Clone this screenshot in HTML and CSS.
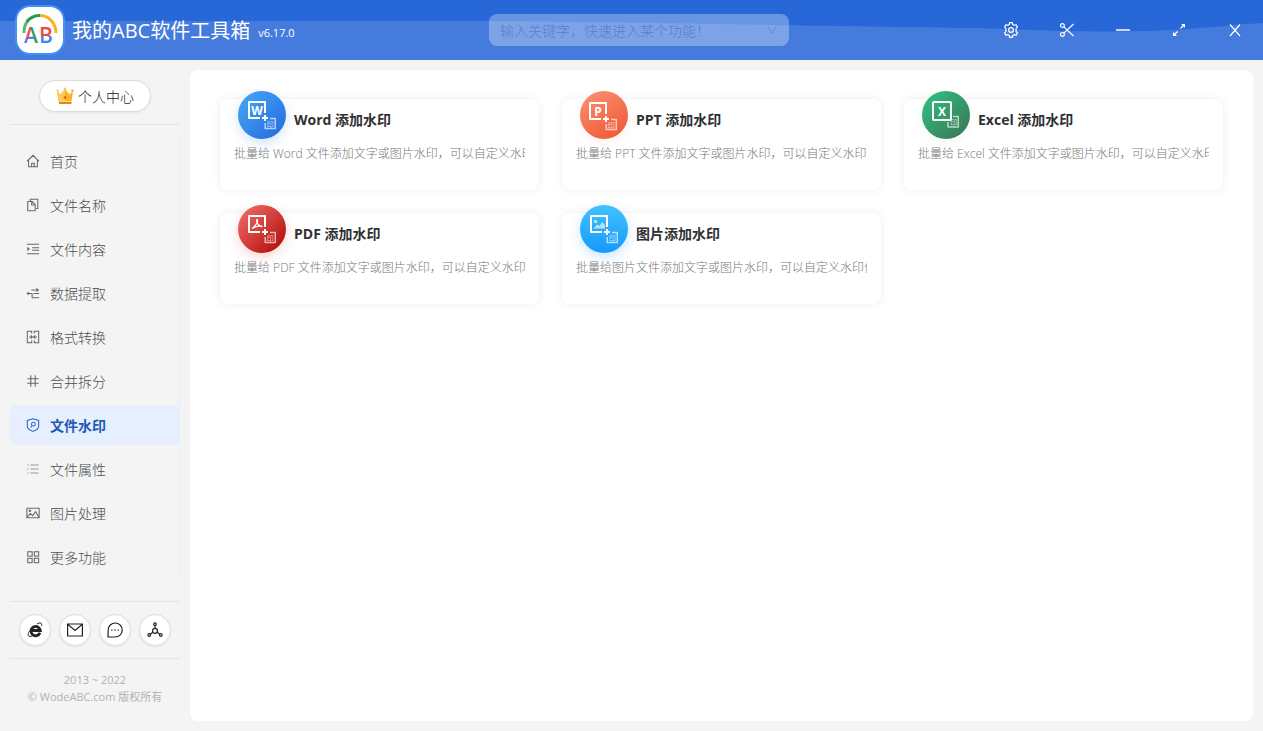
FILE: index.html
```html
<!DOCTYPE html>
<html lang="zh-CN">
<head>
<meta charset="utf-8">
<title>我的ABC软件工具箱</title>
<link rel="stylesheet" href="styles.css">
</head>
<body>
<div class="app">
  <header class="topbar">
    <svg class="wave" viewBox="0 0 1263 60" preserveAspectRatio="none" aria-hidden="true">
      <path d="M0 21H470C650 22 800 26 980 28C1050 31 1100 32 1150 31C1200 29 1230 25 1263 23V60H0Z" fill="#457bdd"/>
    </svg>
    <div class="brand">
      <svg class="logo" viewBox="0 0 50 50" aria-hidden="true">
        <defs>
          <linearGradient id="la" x1="0" x2="1" y1="1" y2=".8"><stop offset=".25" stop-color="#4285f4"/><stop offset=".3" stop-color="#e94b45"/><stop offset=".58" stop-color="#e94b45"/><stop offset=".62" stop-color="#2f9e4f"/></linearGradient>
          <linearGradient id="lb" x1="0" x2="0" y1="0" y2="1"><stop offset=".54" stop-color="#e94b45"/><stop offset=".58" stop-color="#4285f4"/></linearGradient>
        </defs>
        <rect x="1" y="1" width="48" height="48" rx="14" fill="#fff" stroke="#3f93f8" stroke-width="2"/>
        <g fill="none" stroke-width="3">
          <path d="M9 28A16.500 18 0 0 1 13 15.500" stroke="#5bb974"/>
          <path d="M12 16.500A16.500 18 0 0 1 25.500 10.500" stroke="#1f9d4c"/>
          <path d="M25.500 10.500A16 18 0 0 1 41 28" stroke="#f9b218"/>
        </g>
        <text x="9" y="38" class="logo-letter" fill="url(#la)">A</text>
        <path d="M13 33h7" stroke="#4285f4" stroke-width="2"/>
        <text x="24" y="38" class="logo-letter" fill="url(#lb)">B</text>
      </svg>
      <h1 class="brand-name">我的ABC软件工具箱</h1>
      <span class="version">v6.17.0</span>
    </div>
    <label class="search">
      <input class="search-input" type="text" aria-label="搜索功能" placeholder="输入关键字，快速进入某个功能！">
      <svg class="chevron" viewBox="0 0 12 12" aria-hidden="true"><path d="M2 3l4 6 4-6"/></svg>
    </label>
    <div class="controls">
      <button class="control" type="button" aria-label="设置">
        <svg viewBox="0 0 16 16"><path d="M6.300 2.500L6.700 .7h2.600l.4 1.800 1.600.9 1.800-.6 1.300 2.300-1.300 1.300v3.200l1.300 1.300-1.300 2.300-1.800-.6-1.600.9-.4 1.800H6.700l-.4-1.800-1.600-.9-1.800.6-1.300-2.300 1.300-1.300V6.400L1.600 5.100l1.300-2.300 1.800.6z"/><circle cx="8" cy="8" r="2.400"/></svg>
      </button>
      <button class="control" type="button" aria-label="截图">
        <svg viewBox="0 0 16 16"><circle cx="3.400" cy="3.600" r="1.900"/><circle cx="3.400" cy="12.400" r="1.900"/><path d="M4.900 4.900L14.500 14M4.900 11.100L14.500 2"/></svg>
      </button>
      <button class="control" type="button" aria-label="最小化">
        <svg viewBox="0 0 16 16"><path d="M1 8h14" class="minimize"/></svg>
      </button>
      <button class="control" type="button" aria-label="最大化">
        <svg viewBox="0 0 16 16"><path d="M9.500 6.500L13 3M6.500 9.500L3 13"/><path d="M10 2h4v4zM2 10v4h4z" class="solid"/></svg>
      </button>
      <button class="control" type="button" aria-label="关闭">
        <svg viewBox="0 0 16 16"><path d="M3 2.500l10 11.500M13 2.500L3 14"/></svg>
      </button>
    </div>
  </header>

  <div class="body">
    <aside class="sidebar">
      <div class="profile-row">
        <button class="profile" type="button">
          <svg class="crown" viewBox="0 0 18 18" aria-hidden="true">
            <path d="M1 4l3.800 3.500L9 1.500l4.200 6L17 4l-1.500 10.500h-13z" fill="#f9b522"/>
            <path d="M1 4l3.800 3.500L9 1.500v13H2.500z" fill="#fccb5a"/>
            <path d="M3 15h12.500v2H3z" fill="#e0862a"/>
            <circle cx="1.600" cy="3.600" r="1.200" fill="#fdc748"/><circle cx="9" cy="1.800" r="1.300" fill="#fdc748"/><circle cx="16.400" cy="3.600" r="1.200" fill="#fba70b"/>
            <circle cx="9" cy="10.500" r="1.300" fill="#d9532c"/>
          </svg>
          个人中心
        </button>
      </div>
      <nav class="nav">
        <a class="nav-item" href="#"><svg viewBox="0 0 16 16"><path d="M1 8.500L8 1.500l7 7M3 7v7.500h10V7M6.500 14.500v-4h3v4"/></svg>首页</a>
        <a class="nav-item" href="#"><svg viewBox="0 0 16 16"><path d="M5 3.500V1.500h8.500v10.500H11.500M2 4h5l3.500 3.500v7H2zM6.500 4v4h4"/></svg>文件名称</a>
        <a class="nav-item" href="#"><svg viewBox="0 0 16 16"><path d="M1 2.500h14M7 6.500h8M7 9.500h8M1 13.500h14"/><path d="M1.500 5.500v5l3-2.500z" class="solid"/></svg>文件内容</a>
        <a class="nav-item" href="#"><svg viewBox="0 0 16 16"><path d="M1 8.500h6M7 13.500V8.500M6 4.500h7M8.500 8.500h6.500M7 13.500h8"/><path d="M12 2l3 2.500-3 2.500z" class="solid"/><circle cx="2.500" cy="8.500" r="1.500" class="solid"/></svg>数据提取</a>
        <a class="nav-item" href="#"><svg viewBox="0 0 16 16"><path d="M6.500 4V1.500H1.500v13h5V12M9.500 4V1.500h5v13h-5V12M3.500 8h9M5.500 6L7 8 5.500 10M10.500 6L9 8l1.500 2"/></svg>格式转换</a>
        <a class="nav-item" href="#"><svg viewBox="0 0 16 16"><path d="M5.500 1.500v13M10.500 1.500v13M1.500 5.500h13M1.500 10.500h13"/></svg>合并拆分</a>
        <a class="nav-item active" href="#" aria-current="page"><svg viewBox="0 0 16 16"><path d="M8 .8l6.500 2v6.200c0 3-3 5-6.500 6.200C4.500 14 1.500 12 1.500 9V2.800z"/><circle cx="8.500" cy="7" r="2.200"/><path d="M7 8.500L5.300 10.800"/></svg>文件水印</a>
        <a class="nav-item" href="#"><svg viewBox="0 0 16 16" class="light"><path d="M5 3.500h9.500M5 8h9.500M5 12.500h9.500M1.500 3.500h1.500M1.500 8h1.500M1.500 12.500h1.500"/></svg>文件属性</a>
        <a class="nav-item" href="#"><svg viewBox="0 0 16 16"><path d="M1 2.500h14v11H1zM1.500 12.500l3.500-4 2.500 2.500 3.500-4.500 3.500 6"/><circle cx="4.500" cy="5.500" r=".8"/></svg>图片处理</a>
        <a class="nav-item" href="#"><svg viewBox="0 0 16 16"><rect x="2" y="2" width="5" height="5"/><rect x="9.500" y="2" width="5" height="5"/><rect x="2" y="9.500" width="5" height="5"/><rect x="9.500" y="9.500" width="5" height="5"/></svg>更多功能</a>
      </nav>
      <div class="social">
        <button class="round" type="button" aria-label="官网">
          <svg viewBox="0 0 16 16"><path d="M13 10.800A4.700 4.700 0 1 1 13.300 8.500H5" stroke-width="2.800"/><path d="M10 2c3-1.800 5.500-1.300 4.500 1.800M2.500 9c-2.800 4-1.300 7 3.300 4.500" stroke-width="1"/></svg>
        </button>
        <button class="round" type="button" aria-label="邮件">
          <svg viewBox="0 0 16 16"><path d="M.6 2h14.800v12H.6zM1 2.500L8 8.500l7-6"/></svg>
        </button>
        <button class="round" type="button" aria-label="反馈">
          <svg viewBox="0 0 16 16"><path d="M1 15l.2-7A7 7 0 1 1 8 15z"/><path d="M4 8h1.600M7.200 8h1.600M10.400 8h1.600"/></svg>
        </button>
        <button class="round" type="button" aria-label="分享">
          <svg viewBox="0 0 16 16"><circle cx="8" cy="8.800" r="2.500"/><circle cx="8" cy="2.200" r="1.300"/><circle cx="2.200" cy="13" r="1.300"/><circle cx="13.800" cy="13" r="1.300"/><path d="M8 3.500v3M5.800 10.300l-2.500 2M10.200 10.300l2.500 2"/></svg>
        </button>
      </div>
      <footer class="copyright">
        <div>2013 ~ 2022</div>
        <div>© WodeABC.com 版权所有</div>
      </footer>
    </aside>

    <main class="content">
      <a class="card" href="#">
        <div class="card-head">
          <svg class="badge word" viewBox="0 0 48 48" aria-hidden="true"><path d="M27 22V11H11v16h11" class="frame"/><text x="19" y="23.500" class="letter">W</text><path d="M27 24v6M24 27h6" class="plus"/><path d="M32 27.500h5.300v10H27.200v-5.500" class="stamp"/><text x="32.300" y="35.500" class="seal">印</text></svg>
          <h2 class="card-title">Word 添加水印</h2>
        </div>
        <p class="card-text">批量给 Word 文件添加文字或图片水印，可以自定义水印位置</p>
      </a>
      <a class="card" href="#">
        <div class="card-head">
          <svg class="badge ppt" viewBox="0 0 48 48" aria-hidden="true"><path d="M26 23V12H10v16h11" class="frame"/><text x="18" y="24.500" class="letter">P</text><path d="M26 25v6M23 28h6" class="plus"/><path d="M31 28.500h5.300v10H26.200v-5.500" class="stamp"/><text x="31.300" y="36.500" class="seal">印</text></svg>
          <h2 class="card-title">PPT 添加水印</h2>
        </div>
        <p class="card-text">批量给 PPT 文件添加文字或图片水印，可以自定义水印位置</p>
      </a>
      <a class="card" href="#">
        <div class="card-head">
          <svg class="badge excel" viewBox="0 0 48 48" aria-hidden="true"><rect x="11" y="11" width="18" height="18" rx="1" class="frame"/><text x="20" y="24.500" class="letter">X</text><path d="M31 25.500h5.300v10.500H26V31" class="stamp"/><text x="31.800" y="34" class="seal">印</text></svg>
          <h2 class="card-title">Excel 添加水印</h2>
        </div>
        <p class="card-text">批量给 Excel 文件添加文字或图片水印，可以自定义水印位置</p>
      </a>
      <a class="card" href="#">
        <div class="card-head">
          <svg class="badge pdf" viewBox="0 0 48 48" aria-hidden="true"><path d="M27 22V11H11v16h11" class="frame"/><path d="M18.500 14.500c2.500-.5 0 6-4.500 9M18.700 15c0 4 2.300 6 5.800 6.500-3-.8-6.500 0-9.500 1.500" class="pdf-mark"/><path d="M27 24v6M24 27h6" class="plus"/><path d="M32 27.500h5.300v10H27.200v-5.500" class="stamp"/><text x="32.300" y="35.500" class="seal">印</text></svg>
          <h2 class="card-title">PDF 添加水印</h2>
        </div>
        <p class="card-text">批量给 PDF 文件添加文字或图片水印，可以自定义水印位置</p>
      </a>
      <a class="card" href="#">
        <div class="card-head">
          <svg class="badge image" viewBox="0 0 48 48" aria-hidden="true"><path d="M27 22V11H11v16h11" class="frame"/><circle cx="15.500" cy="16.500" r="1.700" class="picture"/><path d="M13 23.500l4.500-4 2 1.500 2.500-4 3 3v3.500z" class="picture"/><path d="M27 24v6M24 27h6" class="plus"/><path d="M32 27.500h5.300v10H27.200v-5.500" class="stamp"/><text x="32.300" y="35.500" class="seal">印</text></svg>
          <h2 class="card-title">图片添加水印</h2>
        </div>
        <p class="card-text">批量给图片文件添加文字或图片水印，可以自定义水印位置</p>
      </a>
    </main>
  </div>
</div>
</body>
</html>
```
FILE: styles.css
```css
* { box-sizing: border-box; }
body {
  margin: 0;
  background: #f4f4f4;
  color: #303133;
  font-family: "Open Sans", "Noto Sans CJK SC", sans-serif;
  font-size: 14px;
}
button, input { font: inherit; }
a { color: inherit; text-decoration: none; }
h1, h2, p { margin: 0; }

.app { display: flex; flex-direction: column; min-height: 100vh; }

/* top bar */
.topbar {
  position: relative;
  display: flex;
  align-items: center;
  height: 60px;
  padding-left: 15px;
  background: #2867d7;
  color: #fff;
}
.wave { position: absolute; inset: 0; width: 100%; height: 100%; }
.brand, .search, .controls { position: relative; }
.brand { display: flex; flex: 1 1 0; align-items: center; }
.logo { width: 50px; height: 50px; margin-right: 7px; }
.logo-letter { font: 600 21px "Open Sans", sans-serif; }
.brand-name { padding-top: 2px; font-size: 20px; font-weight: 400; line-height: 30px; white-space: nowrap; }
.version { margin: 6px 0 0 8px; font-size: 11px; line-height: 16px; }
.search {
  display: flex;
  align-items: center;
  width: 300px;
  height: 32px;
  padding: 0 11px;
  border-radius: 8px;
  background: rgba(255, 255, 255, .3);
}
.search-input {
  flex: 1;
  min-width: 0;
  padding: 0;
  border: 0;
  outline: 0;
  background: none;
  color: #fff;
  font-weight: 300;
}
.search-input::placeholder { color: #557fce; opacity: 1; }
.chevron { width: 12px; height: 12px; fill: none; stroke: #6489d0; }
.controls { display: flex; flex: 1 1 0; justify-content: flex-end; }
.control {
  display: grid;
  place-items: center;
  width: 56px;
  height: 60px;
  padding: 0;
  border: 0;
  background: none;
}
.control svg { width: 16px; height: 16px; fill: none; stroke: #fff; stroke-width: 1.2; }
.control .solid { fill: #fff; stroke: none; }
.control .minimize { stroke: #c4d9fa; stroke-width: 2; }

/* sidebar */
.body { display: flex; flex: 1; }
.sidebar { display: flex; flex: 0 0 190px; flex-direction: column; padding: 20px 10px 0; }
.profile-row { display: flex; justify-content: center; padding-bottom: 12px; border-bottom: 1px solid #e4e4e4; }
.profile {
  display: flex;
  align-items: center;
  gap: 4px;
  height: 32px;
  padding: 0 16px;
  border: 1px solid #dcdcdc;
  border-radius: 16px;
  background: #fff;
  color: #222;
  font-weight: 300;
  box-shadow: 0 1px 2px rgba(0, 0, 0, .06);
}
.crown { width: 18px; height: 18px; }
.nav {
  display: flex;
  flex: 1;
  flex-direction: column;
  gap: 4px;
  margin: 10px 0 22px;
  padding-top: 6px;
  background: linear-gradient(#ededed, #ededed) right / 1px 100% no-repeat;
}
.nav-item {
  display: flex;
  align-items: center;
  gap: 9px;
  height: 40px;
  padding: 0 15px;
  border-radius: 6px;
  color: #4c4d50;
  font-weight: 300;
}
.nav-item svg { width: 16px; height: 16px; padding: 1px; fill: none; stroke: #66676a; stroke-width: 1.2; }
.nav-item .light { stroke: #999; }
.nav-item .solid { fill: #66676a; stroke: none; }
.nav-item.active { background: #e6effd; color: #1f58b8; font-weight: 700; }
.nav-item.active svg { stroke: #2b67cc; }
.social {
  display: flex;
  justify-content: center;
  gap: 8px;
  padding: 12px 0;
  border: solid #e4e4e4;
  border-width: 1px 0;
}
.round {
  display: grid;
  place-items: center;
  width: 32px;
  height: 32px;
  padding: 0;
  border: 1px solid #dcdcdc;
  border-radius: 50%;
  background: #fff;
  box-shadow: 0 1px 2px rgba(0, 0, 0, .06);
}
.round svg { width: 16px; height: 16px; fill: none; stroke: #222; stroke-width: 1.2; }
.copyright {
  padding: 12px 0 26px;
  color: #b2b2b2;
  font-size: 11px;
  line-height: 17px;
  text-align: center;
}

/* feature cards */
.content {
  display: grid;
  flex: 1;
  grid-template-columns: repeat(3, minmax(0, 1fr));
  align-content: start;
  gap: 23px;
  margin: 10px 10px 10px 0;
  padding: 29px 30px;
  border-radius: 8px;
  background: #fff;
}
.card {
  height: 91px;
  padding: 0 14px;
  border-radius: 8px;
  background: #fff;
  box-shadow: 0 0 10px rgba(0, 0, 0, .07);
}
.card-head { display: flex; align-items: center; gap: 8px; height: 42px; padding-left: 4px; }
.badge { flex: none; width: 48px; height: 48px; margin-top: -10px; border-radius: 50%; }
.card-title { font-size: 14px; font-weight: 700; line-height: 20px; }
.card-text {
  overflow: hidden;
  color: #777;
  font-size: 12px;
  font-weight: 300;
  line-height: 26px;
  white-space: nowrap;
}
.word { background: linear-gradient(135deg, #45a9f5, #2469df); box-shadow: 0 4px 12px rgba(44, 122, 233, .22); }
.ppt { background: linear-gradient(150deg, #fb9274, #ee5430); box-shadow: 0 4px 12px rgba(240, 95, 58, .08); }
.excel { background: linear-gradient(135deg, #30c383, #3a7352); box-shadow: 0 4px 12px rgba(46, 150, 98, .06); }
.pdf { background: linear-gradient(135deg, #f5716c, #ad0704); box-shadow: 0 4px 12px rgba(210, 50, 40, .2); }
.image { background: linear-gradient(#41c2fe, #1799fc); box-shadow: 0 4px 12px rgba(30, 160, 252, .25); }
.frame { fill: none; stroke: #fff; stroke-width: 2; stroke-linejoin: round; }
.plus { fill: none; stroke: #fff; stroke-width: 2; }
.stamp { fill: none; stroke: rgba(255, 255, 255, .65); stroke-width: 1.5; stroke-linejoin: round; }
.letter { fill: #fff; font: 700 12px "Open Sans", sans-serif; text-anchor: middle; }
.seal { fill: rgba(255, 255, 255, .75); font: 400 7px "Noto Sans CJK SC", sans-serif; text-anchor: middle; }
.pdf-mark { fill: none; stroke: #fff; stroke-width: 1.3; }
.picture { fill: rgba(255, 255, 255, .65); }
```
